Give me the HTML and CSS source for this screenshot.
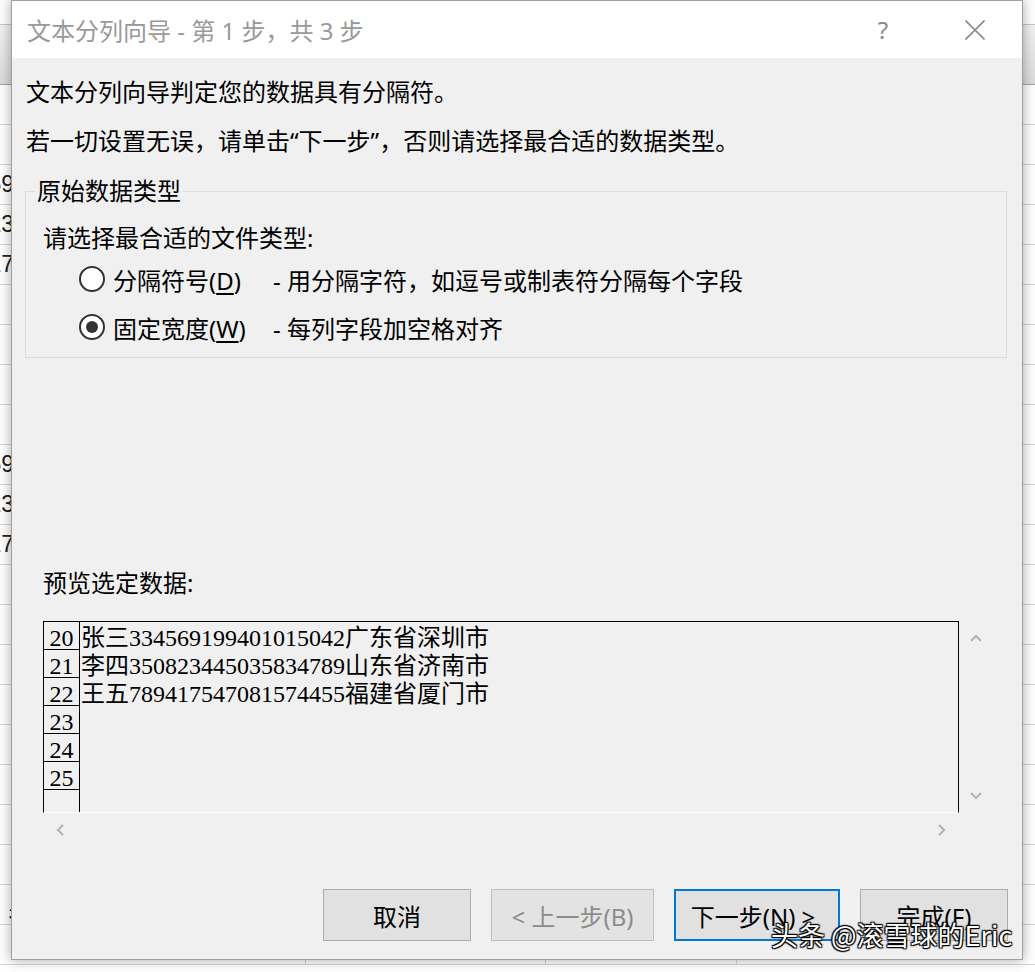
FILE: index.html
```html
<!DOCTYPE html>
<html lang="zh-CN">
<head>
<meta charset="utf-8">
<title>文本分列向导 - 第 1 步，共 3 步</title>
<link rel="stylesheet" href="styles.css">
</head>
<body>
<div class="sheet">
  <div class="sheet-top"></div>
  <div class="sheet-head"></div>
  <div class="srow"><div class="clip"></div><div class="cb"></div><div class="cc"></div><div class="cd"></div></div>
  <div class="srow"><div class="clip"></div><div class="cb"></div><div class="cc"></div><div class="cd"></div></div>
  <div class="srow"><div class="clip"><span>1359</span></div><div class="cb"></div><div class="cc"></div><div class="cd"></div></div>
  <div class="srow"><div class="clip"><span>3823</span></div><div class="cb"></div><div class="cc"></div><div class="cd"></div></div>
  <div class="srow"><div class="clip"><span>4517</span></div><div class="cb"></div><div class="cc"></div><div class="cd"></div></div>
  <div class="srow"><div class="clip"></div><div class="cb"></div><div class="cc"></div><div class="cd"></div></div>
  <div class="srow"><div class="clip"></div><div class="cb"></div><div class="cc"></div><div class="cd"></div></div>
  <div class="srow"><div class="clip"></div><div class="cb"></div><div class="cc"></div><div class="cd"></div></div>
  <div class="srow"><div class="clip"></div><div class="cb"></div><div class="cc"></div><div class="cd"></div></div>
  <div class="srow"><div class="clip"><span>1359</span></div><div class="cb"></div><div class="cc"></div><div class="cd"></div></div>
  <div class="srow"><div class="clip"><span>3823</span></div><div class="cb"></div><div class="cc"></div><div class="cd"></div></div>
  <div class="srow"><div class="clip"><span>4517</span></div><div class="cb"></div><div class="cc"></div><div class="cd"></div></div>
  <div class="srow"><div class="clip"></div><div class="cb"></div><div class="cc"></div><div class="cd"></div></div>
  <div class="srow"><div class="clip"></div><div class="cb"></div><div class="cc"></div><div class="cd"></div></div>
  <div class="srow"><div class="clip"></div><div class="cb"></div><div class="cc"></div><div class="cd"></div></div>
  <div class="srow"><div class="clip"></div><div class="cb"></div><div class="cc"></div><div class="cd"></div></div>
  <div class="srow"><div class="clip"></div><div class="cb"></div><div class="cc"></div><div class="cd"></div></div>
  <div class="srow"><div class="clip"></div><div class="cb"></div><div class="cc"></div><div class="cd"></div></div>
  <div class="srow"><div class="clip"></div><div class="cb"></div><div class="cc"></div><div class="cd"></div></div>
  <div class="srow"><div class="clip"></div><div class="cb"></div><div class="cc"></div><div class="cd"></div></div>
  <div class="srow labels"><div class="lab1">身份证号</div><div class="lab2">地址</div><div class="cd"></div></div>
  <div class="srow"><div class="clip"></div><div class="cb"></div><div class="cc"></div><div class="cd"></div></div>
</div>

<div class="dialog">
  <div class="titlebar">
    <span class="title">文本分列向导 - 第 1 步，共 3 步</span>
    <span class="help">?</span>
    <svg class="close" width="20" height="20" viewBox="0 0 20 20"><path d="M0.5 0.5 L19.5 19.5 M19.5 0.5 L0.5 19.5" stroke="#8a8a8a" stroke-width="1.6" fill="none"/></svg>
  </div>
  <div class="body">
    <p class="intro">文本分列向导判定您的数据具有分隔符。</p>
    <p class="intro">若一切设置无误，请单击“下一步”，否则请选择最合适的数据类型。</p>
    <fieldset class="group">
      <legend>原始数据类型</legend>
      <div class="prompt">请选择最合适的文件类型:</div>
      <div class="option first"><span class="radio"></span><span class="opt-label">分隔符号(<u>D</u>)</span><span class="opt-desc">- 用分隔字符，如逗号或制表符分隔每个字段</span></div>
      <div class="option second"><span class="radio checked"></span><span class="opt-label">固定宽度(<u>W</u>)</span><span class="opt-desc">- 每列字段加空格对齐</span></div>
    </fieldset>
    <div class="preview-label">预览选定数据:</div>
    <div class="preview">
      <div class="pbox">
        <div class="nums">
          <div class="num">20</div>
          <div class="num">21</div>
          <div class="num">22</div>
          <div class="num">23</div>
          <div class="num">24</div>
          <div class="num">25</div>
        </div>
        <div class="data">
          <div class="line">张三334569199401015042广东省深圳市</div>
          <div class="line">李四350823445035834789山东省济南市</div>
          <div class="line">王五789417547081574455福建省厦门市</div>
        </div>
      </div>
      <div class="vscroll">
        <span class="arrow"><svg width="12" height="8" viewBox="0 0 12 8"><polyline points="1,7 6,2 11,7" fill="none" stroke="#b4b4b4" stroke-width="2.2"/></svg></span>
        <span class="arrow"><svg width="12" height="8" viewBox="0 0 12 8"><polyline points="1,1 6,6 11,1" fill="none" stroke="#b4b4b4" stroke-width="2.2"/></svg></span>
      </div>
      <div class="hscroll">
        <span class="arrow"><svg width="8" height="12" viewBox="0 0 8 12"><polyline points="7,1 2,6 7,11" fill="none" stroke="#b4b4b4" stroke-width="2.2"/></svg></span>
        <span class="arrow"><svg width="8" height="12" viewBox="0 0 8 12"><polyline points="1,1 6,6 1,11" fill="none" stroke="#b4b4b4" stroke-width="2.2"/></svg></span>
      </div>
    </div>
    <div class="buttons">
      <button class="btn cancel">取消</button>
      <button class="btn prev" disabled>&lt; 上一步(B)</button>
      <button class="btn next default">下一步(N) &gt;</button>
      <button class="btn finish">完成(F)</button>
    </div>
  </div>
  <div class="watermark">头条 @滚雪球的Eric</div>
</div>
</body>
</html>
```

FILE: styles.css
```css
html, body {
  margin: 0;
  padding: 0;
}
body {
  width: 1035px;
  height: 972px;
  overflow: hidden;
  background: #fff;
  position: relative;
  font-family: "Liberation Sans", "Noto Sans CJK SC", sans-serif;
}

/* spreadsheet behind the dialog */
.sheet {
  display: flex;
  flex-direction: column;
}
.sheet-top {
  height: 25px;
  background: #fff;
  border-bottom: 1px solid #c6c6c6;
  box-sizing: border-box;
}
.sheet-head {
  height: 60px;
  box-sizing: border-box;
  background: linear-gradient(#f2f2f2, #dcdcdc);
  border-bottom: 1px solid #a3a3a3;
}
.srow {
  height: 40px;
  flex: none;
  box-sizing: border-box;
  border-bottom: 1px solid #d6d6d6;
  display: flex;
  font-size: 23px;
  color: #222;
}
.clip {
  width: 14px;
  overflow: hidden;
  display: flex;
  justify-content: flex-end;
  align-items: center;
  flex: none;
}
.cb {
  width: 291px;
  border-right: 1px solid #d6d6d6;
  flex: none;
}
.cc {
  width: 239px;
  border-right: 1px solid #d6d6d6;
  flex: none;
}
.cd {
  width: 190px;
  border-right: 1px solid #d6d6d6;
  flex: none;
}
.labels {
  font-size: 24px;
  line-height: 46px;
  color: #000;
}
.lab1 {
  width: 297px;
  padding-left: 8px;
  border-right: 1px solid #d6d6d6;
  flex: none;
}
.lab2 {
  width: 144px;
  padding-left: 95px;
  border-right: 1px solid #d6d6d6;
  flex: none;
}

/* dialog window */
.dialog {
  position: absolute;
  left: 11px;
  top: 0;
  width: 1012px;
  height: 960px;
  box-sizing: border-box;
  border: 1px solid #a0a0a0;
  background: #f0f0f0;
  box-shadow: 0 0 12px rgba(0, 0, 0, 0.35);
  display: flex;
  flex-direction: column;
  font-family: "Noto Sans", "Noto Sans CJK SC", sans-serif;
  font-size: 24px;
  color: #000;
}
.titlebar {
  height: 57px;
  flex: none;
  background: #fff;
  display: flex;
  align-items: center;
  padding-left: 15px;
}
.title {
  flex: 1;
  color: #999;
  white-space: nowrap;
}
.help {
  width: 14px;
  text-align: center;
  color: #8a8a8a;
  margin-right: 75px;
}
.close {
  margin-right: 37px;
  flex: none;
}

.body {
  flex: 1;
  display: flex;
  flex-direction: column;
  padding: 18px 14px 0 14px;
}
.intro {
  margin: 0;
  line-height: 32px;
  white-space: nowrap;
}
.intro + .intro {
  margin-top: 17px;
}

.group {
  margin: 18px 1px 0 -1px;
  border: 1px solid #dcdcdc;
  padding: 0 0 14px 0;
  min-width: 0;
}
.group legend {
  margin-left: 9px;
  padding: 0 2px;
  line-height: 32px;
}
.prompt {
  margin: 15px 0 0 17px;
  line-height: 32px;
}
.option {
  display: flex;
  align-items: center;
  height: 32px;
  margin-left: 53px;
  white-space: nowrap;
}
.option.first {
  margin-top: 9px;
}
.option.second {
  margin-top: 16px;
}
.radio {
  width: 26px;
  height: 26px;
  box-sizing: border-box;
  border: 2px solid #333;
  border-radius: 50%;
  background: #fff;
  flex: none;
  display: flex;
  align-items: center;
  justify-content: center;
}
.radio.checked::after {
  content: "";
  width: 12px;
  height: 12px;
  border-radius: 50%;
  background: #333;
}
.opt-label {
  margin-left: 8px;
  width: 160px;
  flex: none;
}
.opt-label u {
  text-underline-offset: 3px;
}

.preview-label {
  margin: 209px 0 0 17px;
  line-height: 32px;
}
.preview {
  margin: 22px 0 0 17px;
  display: grid;
  grid-template-columns: 916px 34px;
  grid-template-rows: 192px 34px;
}
.pbox {
  box-sizing: border-box;
  border: 1px solid #000;
  border-bottom-color: #fff;
  display: flex;
  overflow: hidden;
  font-family: "Liberation Serif", "Noto Sans CJK SC", serif;
  font-size: 24px;
}
.nums {
  width: 35px;
  border-right: 1px solid #000;
  flex: none;
}
.num {
  height: 28px;
  box-sizing: border-box;
  border-bottom: 1px solid #000;
  padding-top: 2px;
  line-height: 28px;
  text-align: center;
  overflow: visible;
}
.data {
  padding: 2px 0 0 1px;
  flex: 1;
  white-space: nowrap;
}
.line {
  line-height: 28px;
  height: 28px;
}
.vscroll {
  display: flex;
  flex-direction: column;
  justify-content: space-between;
}
.hscroll {
  display: flex;
  justify-content: space-between;
}
.arrow {
  width: 34px;
  height: 34px;
  display: flex;
  align-items: center;
  justify-content: center;
}

.buttons {
  margin-top: 42px;
  display: flex;
  justify-content: flex-end;
  gap: 20px;
}
.btn {
  height: 52px;
  box-sizing: border-box;
  background: #e1e1e1;
  border: 1px solid #adadad;
  font-family: "Noto Sans", "Noto Sans CJK SC", sans-serif;
  font-size: 24px;
  color: #000;
  padding: 0;
  white-space: nowrap;
}
.cancel, .finish {
  width: 148px;
}
.prev {
  width: 163px;
  color: #8c8c8c;
  border-color: #bfbfbf;
  background: #e3e3e3;
}
.next {
  width: 166px;
  padding-right: 8px;
}
.default {
  border: 2px solid #0078d7;
}

.watermark {
  position: absolute;
  left: 759px;
  top: 916px;
  font-family: "Noto Sans CJK SC", sans-serif;
  font-size: 27px;
  line-height: 36px;
  color: #fff;
  white-space: nowrap;
  text-shadow: 0 0 2px #000, 1px 1px 1px #000, -1px -1px 1px #000, 1px -1px 1px #000, -1px 1px 1px #000;
}
```
